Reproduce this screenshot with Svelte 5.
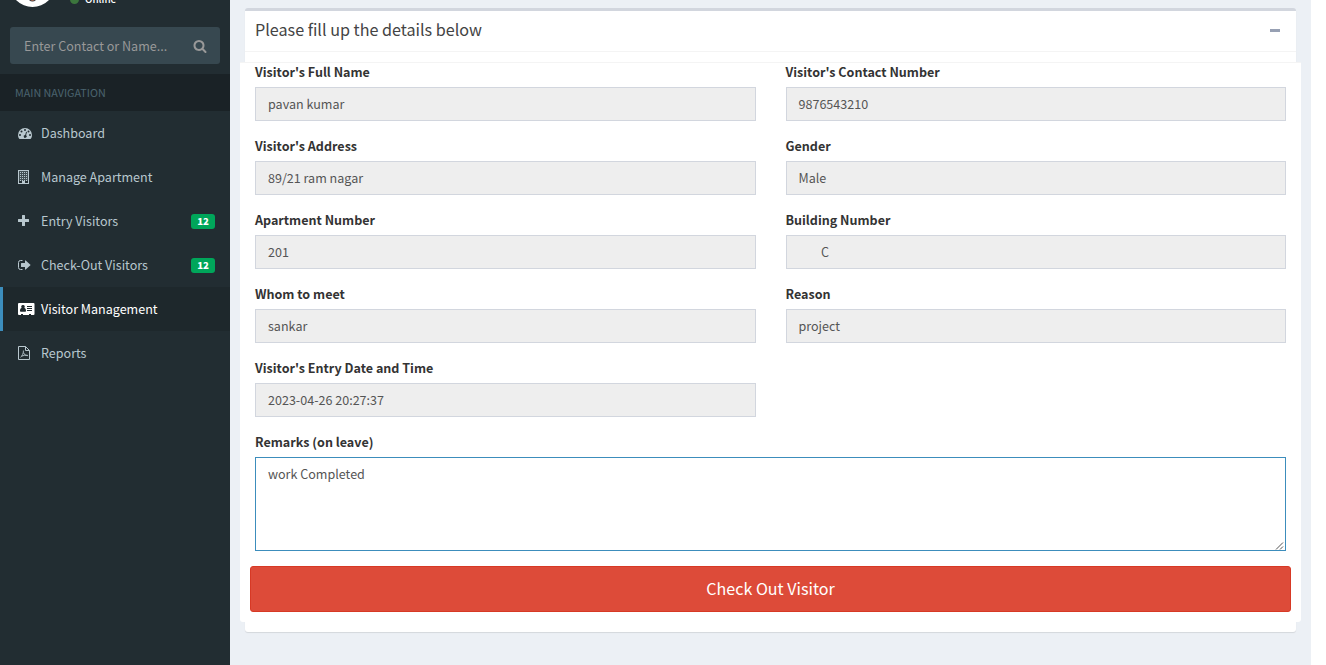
<script>
  const menu = [
    { icon: 'dash', label: 'Dashboard' },
    { icon: 'building', label: 'Manage Apartment' },
    { icon: 'plus', label: 'Entry Visitors', count: 12 },
    { icon: 'out', label: 'Check-Out Visitors', count: 12 },
    { icon: 'card', label: 'Visitor Management', active: true },
    { icon: 'pdf', label: 'Reports' }
  ];
  const fields = [
    { label: "Visitor's Full Name", value: 'pavan kumar' },
    { label: "Visitor's Contact Number", value: '9876543210' },
    { label: "Visitor's Address", value: '89/21 ram nagar' },
    { label: 'Gender', value: 'Male' },
    { label: 'Apartment Number', value: '201' },
    { label: 'Building Number', value: 'C', indent: true },
    { label: 'Whom to meet', value: 'sankar' },
    { label: 'Reason', value: 'project' },
    { label: "Visitor's Entry Date and Time", value: '2023-04-26 20:27:37' }
  ];
  const windows = [0, 1, 2, 3, 4].flatMap((r) => [0, 1, 2, 3].map((c) => [3 + c * 2, 3 + r * 2]));
</script>

<div class="page">
  <aside>
    <div class="user">
      <svg class="avatar" width="45" height="45" viewBox="0 0 45 45">
        <circle cx="22.5" cy="22.5" r="22.5" fill="#fff" />
        <path d="M13 31c4-4 15-4 19 0l-5 6q-4.500 5-9 0z" fill="#30343a" />
        <path d="M20 32h5l-.5 6q-2 2-4 0z" fill="#a5674f" />
      </svg>
      <div class="status"><i></i><span>Online</span></div>
    </div>
    <div class="search">
      <span>Enter Contact or Name...</span>
      <svg width="14" height="14" viewBox="0 0 1792 1792"><path fill="#999" d="M1216 832q0-185-131.500-316.500t-316.500-131.500-316.500 131.500-131.500 316.500 131.500 316.500 316.500 131.500 316.500-131.500 131.500-316.500zm512 832q0 52-38 90t-90 38q-54 0-90-38l-343-342q-179 124-399 124-143 0-273.500-55.500t-225-150-150-225-55.500-273.500 55.500-273.500 150-225 225-150 273.500-55.500 273.500 55.500 225 150 150 225 55.500 273.500q0 220-124 399l343 343q37 37 37 90z" /></svg>
    </div>
    <div class="heading">MAIN NAVIGATION</div>
    <nav>
      {#each menu as item}
        <a class:active={item.active}>
          <svg width="18" height="16" viewBox="0 0 18 16" fill="currentColor">
            {#if item.icon === 'dash'}
              <path fill-rule="evenodd" d="M8 3a7 7 0 0 1 7 7q0 2-1 3.600-.2.400-.6.400H2.600q-.4 0-.6-.4Q1 12 1 10a7 7 0 0 1 7-7zM3 9a1 1 0 1 0 0 2 1 1 0 0 0 0-2zM4.500 5.500a1 1 0 1 0 0 2 1 1 0 0 0 0-2zM8 4a1 1 0 1 0 0 2 1 1 0 0 0 0-2zM11.500 5.500a1 1 0 1 0 0 2 1 1 0 0 0 0-2zM13 9a1 1 0 1 0 0 2 1 1 0 0 0 0-2zM9.100 6.700l-.9 3.200a1.500 1.500 0 1 0 .9.300l.9-3.200z" />
            {:else if item.icon === 'building'}
              <path fill-rule="evenodd" d="M1 1h11v14H1zM2 2v12h3v-2h3v2h3V2z" />
              <path d="M2 2h9v10H2z" opacity=".22" />
              {#each windows as [x, y]}<rect {x} {y} width="1" height="1" />{/each}
            {:else if item.icon === 'plus'}
              <path d="M5 2.500q0-.5.500-.5h2q.5 0 .5.500V6h3.500q.5 0 .5.500v2q0 .5-.5.500H8v3.500q0 .5-.5.500h-2q-.5 0-.5-.5V9H1.500Q1 9 1 8.500v-2Q1 6 1.500 6H5z" />
            {:else if item.icon === 'out'}
              <path d="M5.500 3.500h-2q-2 0-2 2v5q0 2 2 2h2" fill="none" stroke="currentColor" />
              <path d="M8 3.700q0-.8.700-.3l4.700 4.300q.3.300 0 .6l-4.700 4.300Q8 13.100 8 12.300V10H4.600Q4 10 4 9.500v-3Q4 6 4.600 6H8z" />
            {:else if item.icon === 'card'}
              <path fill-rule="evenodd" d="M2 2h14.500q1 0 1 1v10q0 1-1 1H14v-1h-2v1H6v-1H4v1H2q-1 0-1-1V3q0-1 1-1zM6 4a1.700 1.700 0 0 0-1.300 2.900C3.500 7.200 3 8 3 10q0 .8.800.8h4.400q.8 0 .8-.8c0-2-.5-2.800-1.700-3.100A1.700 1.700 0 0 0 6 4zM10 5v1h5V5zM10 7v1h5V7zM10 9v1h5V9z" />
            {:else}
              <path d="M1.500 1.500h7l4 4v9h-11zM8.500 1.500v4h4" fill="none" stroke="currentColor" />
              <path d="M3.500 12.300C5 11.500 6.700 8 6.400 5.500M6.400 7.500C7 9.500 8.800 10.600 11 10.700M4.500 11.200q3-1.300 6-1" fill="none" stroke="currentColor" stroke-width=".9" />
            {/if}
          </svg>
          <span>{item.label}</span>
          {#if item.count}<b>{item.count}</b>{/if}
        </a>
      {/each}
    </nav>
  </aside>

  <main>
    <section class="box">
      <header>
        <h3>Please fill up the details below</h3>
        <i class="minus"></i>
      </header>
      <div class="panel">
        <div class="fields">
          {#each fields as f}
            <div>
              <div class="label">{f.label}</div>
              <div class="control" class:indent={f.indent}>{f.value}</div>
            </div>
          {/each}
        </div>
        <div class="remarks">
          <div class="label">Remarks (on leave)</div>
          <div class="control area">
            <span>work Completed</span>
            <svg width="9" height="9" viewBox="0 0 9 9"><path d="M1 8.500L8 1.500M5 8.500L8 5.500" stroke="#555" fill="none" /></svg>
          </div>
        </div>
        <button>Check Out Visitor</button>
      </div>
    </section>
  </main>
</div>

<style>
  :global(body) { margin: 0; background: #fff; overflow: hidden; }
  .page, .page * { box-sizing: border-box; }
  .page {
    display: flex;
    width: 1326px;
    height: 665px;
    padding-right: 15px;
    overflow: hidden;
    font: 12.55px/20px "Noto Sans CJK JP", "Noto Sans CJK SC", sans-serif;
    color: #333;
  }
  aside { width: 230px; flex: none; background: #222d32; color: #b8c7ce; overflow: hidden; }
  .user { display: flex; align-items: flex-end; height: 45px; margin-top: -38px; padding-left: 10px; }
  .avatar { flex: none; }
  .status { display: flex; align-items: center; gap: 6px; height: 16px; margin-left: 15px; font-size: 9.9px; font-weight: 500; line-height: 16px; color: #fff; }
  .status i { width: 9px; height: 9px; border-radius: 50%; background: #3c763d; }
  .search { display: flex; align-items: center; justify-content: space-between; height: 37px; margin: 20px 10px 10px; padding: 0 13px 0 14px; border-radius: 3px; background: #374850; color: #999; }
  .heading { height: 37px; padding-left: 15px; background: #1a2226; color: #4b646f; font-size: 10.75px; line-height: 37px; }
  a { display: flex; align-items: center; height: 44px; padding: 0 15px 0 14px; border-left: 3px solid transparent; }
  a svg { flex: none; margin-right: 6px; }
  a span { flex: 1; }
  a b { width: 24px; height: 15px; border-radius: 3px; background: #00a65a; color: #fff; font-size: 9.6px; font-weight: 900; line-height: 14px; text-align: center; }
  a.active { border-color: #3c8dbc; background: #1e282c; color: #fff; }
  main { flex: 1; padding: 8px 15px 0; background: #ecf0f5; }
  .box { height: 624px; border-top: 3px solid #d2d6de; border-radius: 3px; background: #fff; box-shadow: 0 1px 1px rgba(0, 0, 0, .1); }
  header { display: flex; align-items: flex-start; justify-content: space-between; height: 41px; padding: 8px 16px 0 10px; border-bottom: 1px solid #f4f4f4; }
  h3 { margin: 0; font-size: 16.15px; font-weight: 400; line-height: 20px; color: #444; }
  .minus { width: 10px; height: 3px; margin-top: 10px; background: #97a0b3; }
  .panel { height: 560px; margin: 10px -5px 0; padding: 0 10px; border-top: 1px solid #f4f4f4; border-radius: 0 0 3px 3px; background: #fff; }
  .fields { display: grid; grid-template-columns: 1fr 1fr; gap: 15px 30px; margin: -1px 5px 15px; }
  .label { height: 20px; margin-bottom: 5px; font-weight: 700; }
  .control { height: 34px; padding: 6px 12px; border: 1px solid #d2d6de; background: #eee; color: #555; }
  .indent { padding-left: 34.5px; }
  .remarks { margin: 0 5px 15px; }
  .area { display: flex; justify-content: space-between; height: 94px; padding-right: 1px; padding-bottom: 0; border-color: #3c8dbc; background: #fff; }
  .area svg { align-self: flex-end; }
  button { display: block; width: 100%; height: 46px; padding: 0 0 2px; border: 1px solid #d73925; border-radius: 3px; background: #dd4b39; color: #fff; font: 400 16.1px/24px "Noto Sans CJK JP", "Noto Sans CJK SC", sans-serif; }
</style>
